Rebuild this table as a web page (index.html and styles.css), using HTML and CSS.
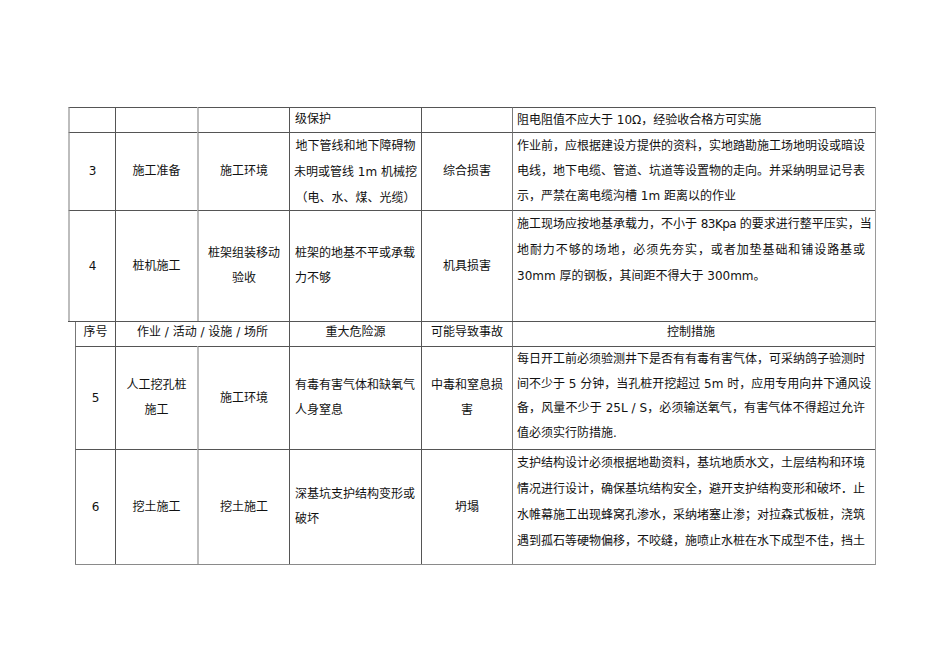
FILE: index.html
```html
<!DOCTYPE html>
<html lang="zh-CN">
<head>
<meta charset="utf-8">
<title>危险源控制措施表</title>
<link rel="stylesheet" href="styles.css">
</head>
<body>
<div class="page">
  <div class="sheet sheet-top">
    <div class="c first"></div>
    <div class="c"></div>
    <div class="c soft"></div>
    <div class="c hz r1">级保护</div>
    <div class="c"></div>
    <div class="c ctl r1"><div class="ln">阻电阻值不应大于 10Ω，经验收合格方可实施</div></div>

    <div class="c first">3</div>
    <div class="c">施工准备</div>
    <div class="c soft">施工环境</div>
    <div class="c hz hz-center lh26"><div class="ln">地下管线和地下障碍物</div><div class="ln">未明或管线 1m 机械挖</div><div class="ln">（电、水、煤、光缆）</div></div>
    <div class="c">综合损害</div>
    <div class="c ctl"><div class="ln j">作业前，应根据建设方提供的资料，实地踏勘施工场地明设或暗设</div><div class="ln j">电线，地下电缆、管道、坑道等设置物的走向。并采纳明显记号表</div><div class="ln">示，严禁在离电缆沟槽 1m 距离以的作业</div></div>

    <div class="c first">4</div>
    <div class="c">桩机施工</div>
    <div class="c soft">桩架组装移动<br>验收</div>
    <div class="c hz"><div class="ln">桩架的地基不平或承载</div><div class="ln">力不够</div></div>
    <div class="c">机具损害</div>
    <div class="c ctl ctl-r4"><div class="ln j">施工现场应按地基承载力，不小于 <span class="lat">83Kpa</span> 的要求进行整平压实，当</div><div class="ln j">地耐力不够的场地，必须先夯实，或者加垫基础和铺设路基或</div><div class="ln">30mm 厚的钢板，其间距不得大于 300mm。</div></div>
  </div>

  <div class="sheet sheet-bottom">
    <div class="c first head">序号</div>
    <div class="c head span2">作业 / 活动 / 设施 / 场所</div>
    <div class="c head">重大危险源</div>
    <div class="c head">可能导致事故</div>
    <div class="c ctl head ctl-head">控制措施</div>

    <div class="c first">5</div>
    <div class="c">人工挖孔桩<br>施工</div>
    <div class="c soft">施工环境</div>
    <div class="c hz"><div class="ln">有毒有害气体和缺氧气</div><div class="ln">人身窒息</div></div>
    <div class="c">中毒和窒息损<br>害</div>
    <div class="c ctl ctl-r5"><div class="ln j">每日开工前必须验测井下是否有有毒有害气体，可采纳鸽子验测时</div><div class="ln j">间不少于 5 分钟，当孔桩开挖超过 5m 时，应用专用向井下通风设</div><div class="ln j">备，风量不少于 25L / S，必须输送氧气，有害气体不得超过允许</div><div class="ln">值必须实行防措施.</div></div>

    <div class="c first">6</div>
    <div class="c">挖土施工</div>
    <div class="c soft">挖土施工</div>
    <div class="c hz"><div class="ln">深基坑支护结构变形或</div><div class="ln">破坏</div></div>
    <div class="c">坍塌</div>
    <div class="c ctl ctl-r6"><div class="ln j">支护结构设计必须根据地勘资料，基坑地质水文，土层结构和环境</div><div class="ln j">情况进行设计，确保基坑结构安全，避开支护结构变形和破坏．止</div><div class="ln j">水帷幕施工出现蜂窝孔渗水，采纳堵塞止渗；对拉森式板桩，浇筑</div><div class="ln j">遇到孤石等硬物偏移，不咬缝，施喷止水桩在水下成型不佳，挡土</div></div>
  </div>
</div>
</body>
</html>
```
FILE: styles.css
```css
* {
  box-sizing: border-box;
}

body {
  margin: 0;
  background: #ffffff;
  font-family: "DejaVu Sans", "Noto Sans CJK SC", sans-serif;
  font-size: 12px;
  color: #111111;
}

.page {
  width: 950px;
  height: 672px;
  padding: 107px 0 0 68px;
  overflow: hidden;
}

.sheet {
  display: grid;
  width: 808px;
  grid-template-columns: 47px 82px 92px 132px 91px 363px;
  border-right: 1px solid #9a9a9a;
  border-bottom: 1px solid #555555;
}

.sheet-top {
  grid-template-rows: 25px 78px 111px;
}

.sheet-bottom {
  width: 801px;
  margin-left: 7px;
  grid-template-columns: 40px 82px 92px 132px 91px 363px;
  grid-template-rows: 24px 103px 115px;
  border-bottom-color: #8a8a8a;
}

.c {
  border-left: 1px solid #555555;
  border-top: 1px solid #555555;
  display: flex;
  flex-direction: column;
  justify-content: center;
  align-items: center;
  text-align: center;
  line-height: 25px;
  overflow: hidden;
  white-space: nowrap;
}

.c.first {
  border-left: 2px solid #bdbdbd;
}

.sheet-bottom .c.first {
  border-left: 1px solid #777777;
}

.c.soft {
  border-left: 2px solid #bdbdbd;
}

.c.hz {
  align-items: flex-start;
  text-align: left;
  padding-left: 5px;
}

.c.hz-center {
  align-items: center;
  text-align: center;
  padding-left: 0;
}

.c.lh26 {
  line-height: 26px;
}

.c.r1 {
  padding-bottom: 2px;
}

.c.ctl {
  border-left: 1px solid #7a7a7a;
  align-items: stretch;
  text-align: left;
  padding: 0 10px 0 4px;
}

.c.ctl-head {
  align-items: center;
  text-align: center;
}

.c.head {
  border-top: none;
  padding-bottom: 3px;
}

.span2 {
  grid-column: span 2;
}

.ln {
  white-space: nowrap;
}

.ln.j {
  text-align: justify;
  text-align-last: justify;
}

.lat {
  letter-spacing: -0.6px;
}

.ctl-r4 {
  justify-content: flex-start;
  padding-top: 6px;
  line-height: 26px;
}

.ctl-r5 {
  justify-content: flex-start;
  line-height: 24.5px;
}

.ctl-r6 {
  justify-content: flex-start;
  padding-top: 16px;
  line-height: 26px;
}
```
